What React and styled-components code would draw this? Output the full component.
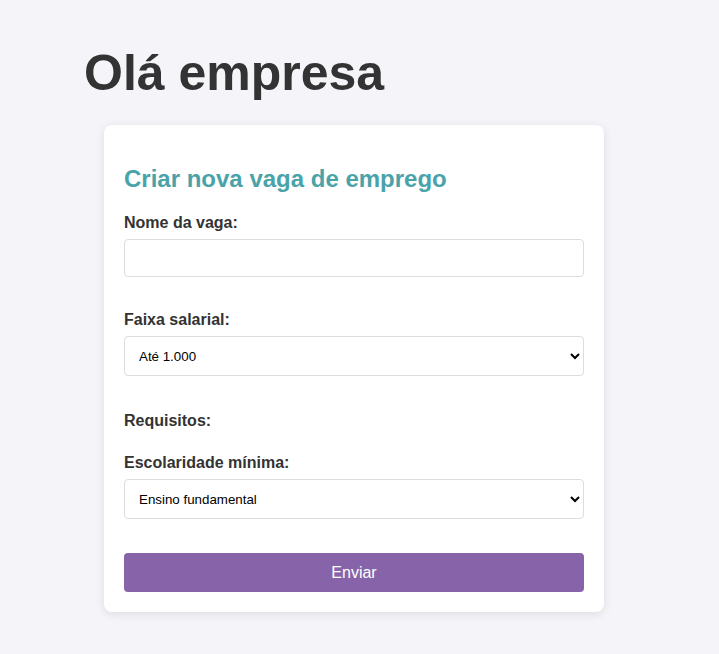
import React from "react";
import styled, { createGlobalStyle } from "styled-components";

const GlobalStyle = createGlobalStyle`
  html, body {
    margin: 0;
    padding: 0;
    background: #f4f4f9;
    font-family: "Liberation Sans", Arial, sans-serif;
    color: #333;
  }
  * { box-sizing: border-box; }
`;

const Page = styled.main`
  display: flex;
  flex-direction: column;
  align-items: flex-start;
  padding: 46px 0 40px 84px;
`;

const Title = styled.h1`
  margin: 0 0 24px 0;
  font-size: 50px;
  line-height: 55px;
  font-weight: bold;
  color: #333;
`;

const Card = styled.section`
  margin-left: 20px;
  width: 500px;
  padding: 20px;
  background: #fff;
  border-radius: 8px;
  box-shadow: 0 2px 10px rgba(0, 0, 0, 0.1);
`;

const CardTitle = styled.h2`
  margin: 20px 0 21px 0;
  font-size: 24px;
  line-height: 28px;
  font-weight: bold;
  color: #4aa3a8;
`;

const Field = styled.div`
  margin-bottom: ${(p) => p.$gap ?? 35}px;
`;

const Label = styled.label`
  display: block;
  font-size: 16px;
  line-height: 18px;
  font-weight: bold;
  color: #333;
  margin-bottom: ${(p) => p.$mb ?? 7}px;
`;

const TextInput = styled.input`
  display: block;
  width: 100%;
  height: 38px;
  padding: 0 10px;
  border: 1px solid #ddd;
  border-radius: 4px;
  font-family: "Liberation Sans", Arial, sans-serif;
  font-size: 16px;
  background: #fff;
`;

const Select = styled.select`
  display: block;
  width: 100%;
  height: 40px;
  padding: 0 10px;
  border: 1px solid #ddd;
  border-radius: 4px;
  font-family: "Liberation Sans", Arial, sans-serif;
  font-size: 13.333px;
  color: #000;
  background: #fff;
`;

const SubmitButton = styled.button`
  display: block;
  width: 100%;
  height: 39px;
  border: none;
  border-radius: 4px;
  background: #8764a9;
  color: #fff;
  font-family: "Liberation Sans", Arial, sans-serif;
  font-size: 16px;
  font-weight: normal;
  cursor: pointer;
`;

export default function App() {
  return (
    <>
      <GlobalStyle />
      <Page>
        <Title>Olá empresa</Title>
        <Card>
          <CardTitle>Criar nova vaga de emprego</CardTitle>
          <form onSubmit={(e) => e.preventDefault()}>
            <Field $gap={34}>
              <Label htmlFor="nome">Nome da vaga:</Label>
              <TextInput id="nome" type="text" />
            </Field>
            <Field $gap={36}>
              <Label htmlFor="faixa">Faixa salarial:</Label>
              <Select id="faixa" defaultValue="1000">
                <option value="1000">Até 1.000</option>
                <option value="2000">De 1.000 a 2.000</option>
                <option value="3000">De 2.000 a 3.000</option>
                <option value="mais">Acima de 3.000</option>
              </Select>
            </Field>
            <Field $gap={24}>
              <Label as="div" $mb={0}>Requisitos:</Label>
            </Field>
            <Field $gap={34}>
              <Label htmlFor="escolaridade">Escolaridade mínima:</Label>
              <Select id="escolaridade" defaultValue="fundamental">
                <option value="fundamental">Ensino fundamental</option>
                <option value="medio">Ensino médio</option>
                <option value="superior">Ensino superior</option>
              </Select>
            </Field>
            <SubmitButton type="submit">Enviar</SubmitButton>
          </form>
        </Card>
      </Page>
    </>
  );
}
